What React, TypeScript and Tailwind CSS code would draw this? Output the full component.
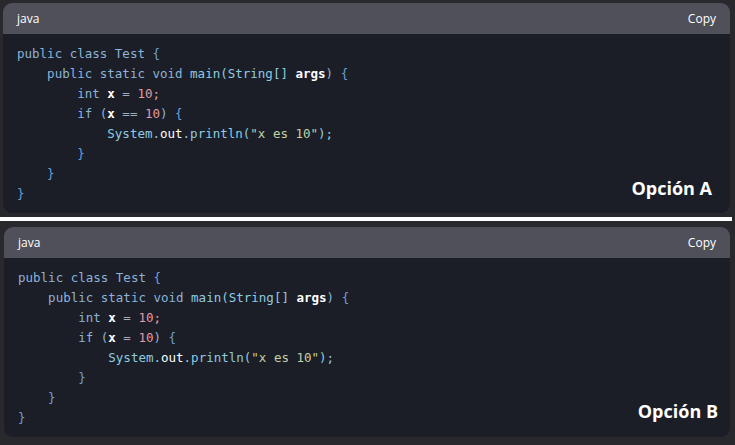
type Tok = { t: string; c: string };

const KW = "text-[#8db3d8]";
const FN = "text-[#8fcbe0]";
const BR = "text-[#6d9fd6]";
const WH = "text-white font-bold";
const OP = "text-[#a3abbb]";
const NUM = "text-[#e59aa6]";
const STR = "text-[#c2d3a6]";

function lines(cond: string): Tok[][] {
  return [
    [{ t: "public class Test ", c: KW }, { t: "{", c: BR }],
    [
      { t: "    public static void ", c: KW },
      { t: "main(String[] ", c: FN },
      { t: "args", c: WH },
      { t: ") ", c: KW },
      { t: "{", c: BR },
    ],
    [
      { t: "        int ", c: KW },
      { t: "x", c: WH },
      { t: " = ", c: OP },
      { t: "10;", c: NUM },
    ],
    [
      { t: "        if (", c: KW },
      { t: "x", c: WH },
      { t: ` ${cond} `, c: OP },
      { t: "10", c: NUM },
      { t: ") ", c: KW },
      { t: "{", c: BR },
    ],
    [
      { t: "            System.", c: FN },
      { t: "out", c: "text-white" },
      { t: ".println(", c: FN },
      { t: '"x es 10"', c: STR },
      { t: ");", c: FN },
    ],
    [{ t: "        }", c: BR }],
    [{ t: "    }", c: BR }],
    [{ t: "}", c: BR }],
  ];
}

function CodeBlock({
  cond,
  label,
  labelPos,
}: {
  cond: string;
  label: string;
  labelPos: string;
}) {
  return (
    <div className="relative flex flex-col rounded-[9px] overflow-hidden bg-[#1b1e27]">
      {/* Header */}
      <div className="flex items-center justify-between h-[31px] px-[14px] bg-[#50505a] text-white text-[12px] font-['Open_Sans',sans-serif]">
        <span>java</span>
        <span>Copy</span>
      </div>

      {/* Code */}
      <pre className="pt-[10px] pb-[9px] px-[14px] text-[12.5px] leading-[20px] font-['DejaVu_Sans_Mono',monospace]">
        {lines(cond).map((ln, i) => (
          <div key={i}>
            {ln.map((tok, j) => (
              <span key={j} className={tok.c}>
                {tok.t}
              </span>
            ))}
          </div>
        ))}
      </pre>

      <span
        className={`absolute ${labelPos} text-white font-bold text-[18px] leading-[22px] font-['Open_Sans',sans-serif]`}
      >
        {label}
      </span>
    </div>
  );
}

export default function App() {
  return (
    <div className="w-[735px] h-[445px] flex flex-col bg-[#29292d] overflow-hidden">
      <div className="h-[217px] pt-[3px] pl-[3px] pr-[5px]">
        <CodeBlock cond="==" label="Opción A" labelPos="right-[18px] bottom-[14px]" />
      </div>
      <div className="h-[4px] mr-[3px] bg-white" />
      <div className="flex-1 pt-[6px] pl-[4px] pr-[5px]">
        <CodeBlock cond="=" label="Opción B" labelPos="right-[12px] bottom-[15px]" />
      </div>
    </div>
  );
}
